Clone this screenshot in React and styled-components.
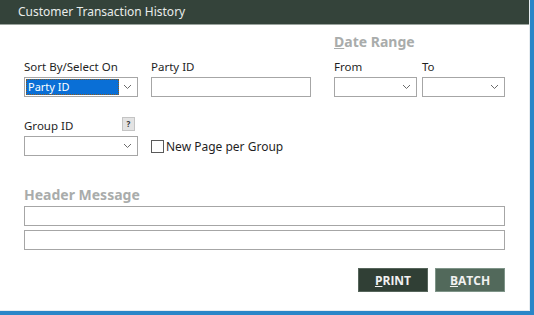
import styled, { createGlobalStyle } from "styled-components"

const Global = createGlobalStyle`
  html, body {
    margin: 0;
    padding: 0;
    background: #ffffff;
  }
  body {
    font-family: "Noto Sans", "Open Sans", sans-serif;
    font-size: 12px;
    color: #1a1a1a;
  }
`

const Frame = styled.div`
  width: 534px;
  height: 315px;
  box-sizing: border-box;
  border-right: 4px solid #2a86c8;
  border-bottom: 4px solid #2a86c8;
  background: #e6ecf0;
  display: flex;
`

const Window = styled.div`
  flex: 1;
  margin: 0 1px 1px 0;
  background: #ffffff;
  display: flex;
  flex-direction: column;
`

const TitleBar = styled.div`
  height: 24px;
  background: #34433a;
  border-bottom: 1px solid #9aa39d;
  color: #e9ecea;
  font-size: 12px;
  line-height: 24px;
  padding-left: 18px;
`

const Body = styled.div`
  padding: 9px 0 0 24px;
  display: grid;
  grid-template-columns: 114px 13px 160px 23px 83px 5px 83px;
`

const Section = styled.div`
  grid-column: ${p => p.$col || "1 / -1"};
  font-size: 14px;
  font-weight: 700;
  color: #a9acab;
  line-height: 16px;
  margin-top: ${p => p.$top || 0}px;
  u { text-decoration-color: #a9acab; }
`

const Field = styled.div`
  display: flex;
  flex-direction: column;
  gap: 3px;
  margin-top: ${p => p.$top || 0}px;
  grid-column: ${p => p.$col || "auto"};
`

const Label = styled.div`
  display: flex;
  align-items: flex-end;
  justify-content: space-between;
  line-height: 15px;
  height: 15px;
  font-size: 11.5px;
  color: #1f1f1f;
`

const Help = styled.span`
  width: 11px;
  height: 12px;
  margin-right: 3px;
  margin-bottom: 2px;
  background: #e3e3e3;
  border: 1px solid #c4c4c4;
  font-size: 8px;
  line-height: 12px;
  text-align: center;
  color: #333;
  font-weight: 700;
`

const Box = styled.div`
  height: 20px;
  box-sizing: border-box;
  border: 1px solid #a6a6a6;
  background: #fff;
  display: flex;
  align-items: center;
  padding: 1px;
`

const Selected = styled.div`
  width: 93px;
  box-sizing: border-box;
  align-self: stretch;
  background: #0a6fd6;
  outline: 1px dotted #8a5a1c;
  outline-offset: -1px;
  color: #fff;
  font-size: 11px;
  line-height: 16px;
  padding-left: 2px;
`

const Chevron = styled.svg`
  margin-left: auto;
  margin-right: 4px;
`

const Arrow = () => (
  <Chevron width="9" height="6" viewBox="0 0 9 6">
    <polyline points="1,1 4.5,4.5 8,1" fill="none" stroke="#6b6b6b" strokeWidth="1" />
  </Chevron>
)

const Dropdown = ({ value }) => (
  <Box>
    {value && <Selected>{value}</Selected>}
    <Arrow />
  </Box>
)

const Check = styled.label`
  grid-column: 3;
  display: flex;
  align-items: center;
  gap: 2px;
  align-self: end;
  height: 20px;
  font-size: 12px;
  color: #1f1f1f;
  white-space: nowrap;
`

const CheckSquare = styled.span`
  width: 11px;
  height: 11px;
  border: 1px solid #5a5a5a;
  background: #fff;
`

const Messages = styled.div`
  grid-column: 1 / -1;
  display: flex;
  flex-direction: column;
  gap: 4px;
  margin-top: 3px;
`

const Buttons = styled.div`
  grid-column: 1 / -1;
  display: flex;
  justify-content: flex-end;
  gap: 7px;
  margin-top: 18px;
`

const Button = styled.button`
  width: 70px;
  height: 24px;
  border: 1px solid ${p => (p.$light ? "#7e9488" : "#56655b")};
  background: ${p => (p.$light ? "#52695b" : "#303f35")};
  color: #f1f1f1;
  font-family: "Open Sans", "Noto Sans", sans-serif;
  font-weight: 700;
  font-size: 12px;
  padding: 0;
`

const App = () => (
  <Frame>
    <Global />
    <Window>
      <TitleBar>Customer Transaction History</TitleBar>
      <Body>
        <Section $col="5 / 8"><u>D</u>ate Range</Section>

        <Field $top={9} $col="1">
          <Label>Sort By/Select On</Label>
          <Dropdown value="Party ID" />
        </Field>
        <Field $top={9} $col="3">
          <Label>Party ID</Label>
          <Box />
        </Field>
        <Field $top={9} $col="5">
          <Label>From</Label>
          <Dropdown />
        </Field>
        <Field $top={9} $col="7">
          <Label>To</Label>
          <Dropdown />
        </Field>

        <Field $top={21} $col="1">
          <Label>Group ID<Help>?</Help></Label>
          <Dropdown />
        </Field>
        <Check>
          <CheckSquare />
          New Page per Group
        </Check>

        <Section $top={31}>Header Message</Section>
        <Messages>
          <Box />
          <Box />
        </Messages>

        <Buttons>
          <Button><u>P</u>RINT</Button>
          <Button $light><u>B</u>ATCH</Button>
        </Buttons>
      </Body>
    </Window>
  </Frame>
)

export default App
